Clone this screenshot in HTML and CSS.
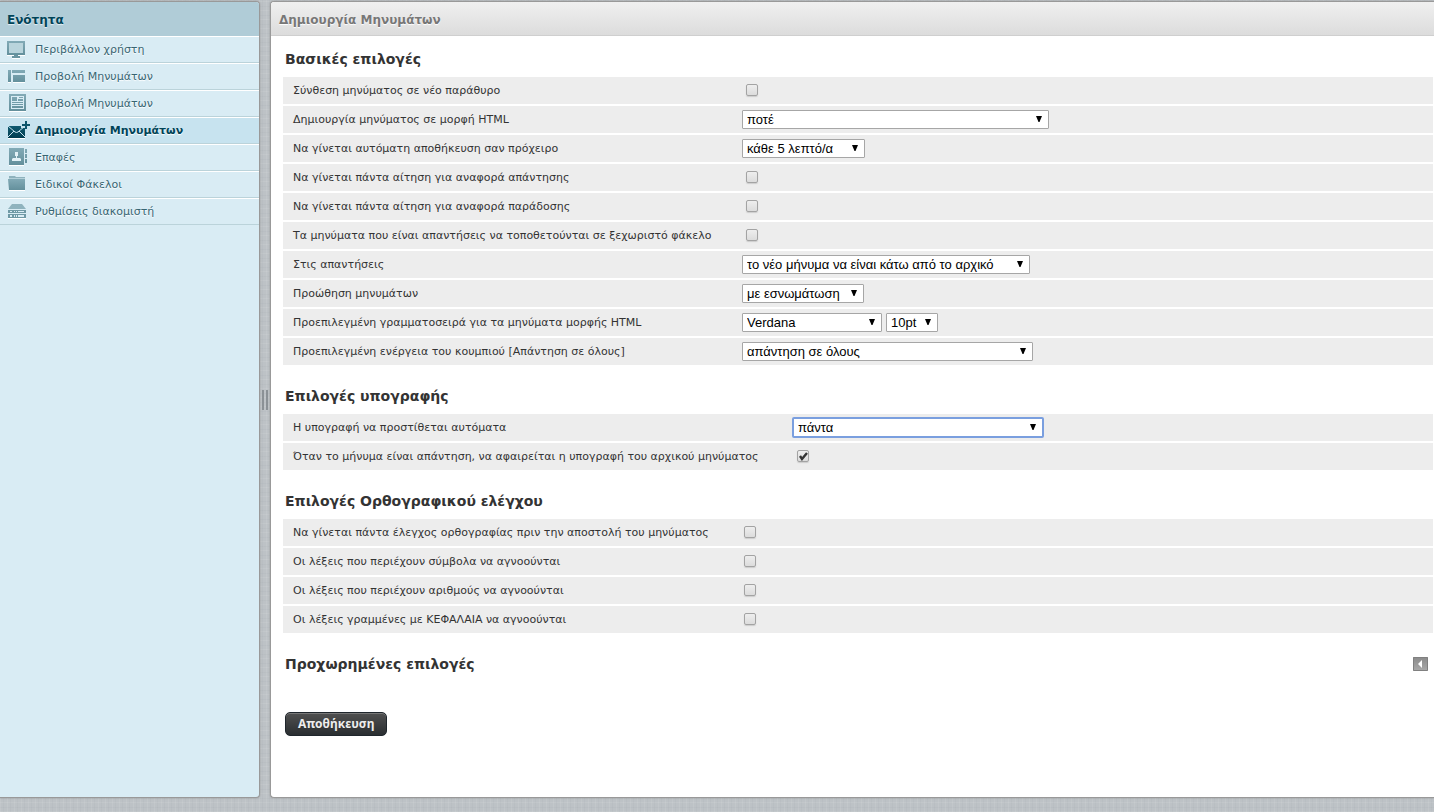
FILE: index.html
```html
<!DOCTYPE html>
<html lang="el">
<head>
<meta charset="utf-8">
<title>Δημιουργία Μηνυμάτων</title>
<link rel="stylesheet" href="styles.css">
</head>
<body>
<svg class="defs" aria-hidden="true">
  <defs>
    <linearGradient id="teal" x1="0" y1="0" x2="0" y2="1"><stop offset="0" stop-color="#82aab6"/><stop offset="1" stop-color="#64909c"/></linearGradient>
    <linearGradient id="dark" x1="0" y1="0" x2="0" y2="1"><stop offset="0" stop-color="#0f5a70"/><stop offset="1" stop-color="#013d50"/></linearGradient>
  </defs>
</svg>
<div class="layout">
  <nav class="sidebar" aria-label="Ενότητα">
    <h2 class="sidebar-title">Ενότητα</h2>
    <ul class="sections">
      <li><a class="section" href="#ui">
        <svg class="icon" viewBox="0 0 24 20"><path fill="#fff" d="M1 15h18v1H1zM6 18h8v1H6z"/><path fill="url(#teal)" fill-rule="evenodd" d="M1 1h18v14H1zM3 3v10h14V3z"/><path fill="#b9d4dc" d="M3 3h14v10H3z"/><path fill="#6a95a1" d="M8 15h4v2H8zM6 16h8v2H6z"/></svg>
        Περιβάλλον χρήστη</a></li>
      <li><a class="section" href="#list">
        <svg class="icon" viewBox="0 0 24 20"><path fill="#fff" d="M2 15h3v1H2zM7 15h12v1H7z"/><path fill="url(#teal)" d="M2 3h3v12H2zM6 3h13v3H6zM7 8h12v7H7z"/></svg>
        Προβολή Μηνυμάτων</a></li>
      <li><a class="section" href="#view">
        <svg class="icon" viewBox="0 0 24 20"><path fill="#fff" d="M3 17h17v1H3z"/><path fill="url(#teal)" d="M3 0h17v17H3z"/><path fill="#d9ecf4" fill-rule="evenodd" d="M5 2h13v13H5zM6 3v4h5V3zM13 3v1h4V3zM12 5v2h5V5zM6 8v1h11V8zM6 10v1h11v-1zM6 12v2h11v-2z"/></svg>
        Προβολή Μηνυμάτων</a></li>
      <li><a class="section active" href="#compose" aria-current="page">
        <svg class="icon" viewBox="0 0 24 20"><path fill="url(#dark)" d="M2 5h17v12H2z"/><path fill="#fff" d="M2 17h17v1H2z"/><path fill="none" stroke="#c7e3ef" d="M2 5l7 6q1.500 1 3 0l7-6M2 16l6-6M19 16l-6-6"/><path fill="#c7e3ef" d="M15 2h7v6h-3V7h-4z"/><path fill="#0c546a" d="M19 0h2v3h3v2h-3v3h-2V5h-3V3h3z"/></svg>
        Δημιουργία Μηνυμάτων</a></li>
      <li><a class="section" href="#contacts">
        <svg class="icon" viewBox="0 0 24 20"><path fill="#fff" d="M3 17h15v1H3z"/><path fill="url(#teal)" d="M3 0h15v17H3zM19 1h2v4h-2zM19 6h2v4h-2zM19 11h2v4h-2z"/><path fill="#e2f1f6" d="M9 4h3v4h-1v2h3l1 1v2H6v-2l1-1h3V8H9z"/></svg>
        Επαφές</a></li>
      <li><a class="section" href="#folders">
        <svg class="icon" viewBox="0 0 24 20"><path fill="#8eb2bd" d="M3 1h6l1 1h9v3H3z"/><path fill="#b4d0d9" d="M3 3h16v1H3z"/><path fill="url(#teal)" d="M2 4h17v11H3z"/><path fill="#fff" d="M3 15h16v1H3z"/></svg>
        Ειδικοί Φάκελοι</a></li>
      <li><a class="section" href="#server">
        <svg class="icon" viewBox="0 0 24 20"><path fill="#8fb3be" d="M6 2h10l4 5H2z"/><path fill="#6f99a5" d="M2 8h18v3H2zM2 12h18v4H2z"/><path fill="#d9ecf4" d="M4 9h2v1H4zM8 9h1v1H8zM10 9h1v1h-1zM12 9h6v1h-6zM4 13h2v2H4zM8 13h1v2H8zM10 13h1v2h-1zM12 13h6v2h-6z"/><path fill="#fff" d="M2 16h18v1H2z"/></svg>
        Ρυθμίσεις διακομιστή</a></li>
    </ul>
  </nav>
  <div class="splitter"><span class="grip"></span></div>
  <main class="panel">
    <h1 class="panel-title">Δημιουργία Μηνυμάτων</h1>
    <form class="prefs">
      <h2 class="group-title">Βασικές επιλογές</h2>
      <table class="options">
        <colgroup><col class="label-main"><col></colgroup>
        <tr><th><label for="o1">Σύνθεση μηνύματος σε νέο παράθυρο</label></th><td><input type="checkbox" class="check" id="o1"></td></tr>
        <tr><th><label for="o2">Δημιουργία μηνύματος σε μορφή HTML</label></th><td><select class="select w-html" id="o2"><option>ποτέ</option></select></td></tr>
        <tr><th><label for="o3">Να γίνεται αυτόματη αποθήκευση σαν πρόχειρο</label></th><td><select class="select w-draft" id="o3"><option>κάθε 5 λεπτό/α</option></select></td></tr>
        <tr><th><label for="o4">Να γίνεται πάντα αίτηση για αναφορά απάντησης</label></th><td><input type="checkbox" class="check" id="o4"></td></tr>
        <tr><th><label for="o5">Να γίνεται πάντα αίτηση για αναφορά παράδοσης</label></th><td><input type="checkbox" class="check" id="o5"></td></tr>
        <tr><th><label for="o6">Τα μηνύματα που είναι απαντήσεις να τοποθετούνται σε ξεχωριστό φάκελο</label></th><td><input type="checkbox" class="check" id="o6"></td></tr>
        <tr><th><label for="o7">Στις απαντήσεις</label></th><td><select class="select w-reply" id="o7"><option>το νέο μήνυμα να είναι κάτω από το αρχικό</option></select></td></tr>
        <tr><th><label for="o8">Προώθηση μηνυμάτων</label></th><td><select class="select w-forward" id="o8"><option>με εσνωμάτωση</option></select></td></tr>
        <tr><th><label for="o9">Προεπιλεγμένη γραμματοσειρά για τα μηνύματα μορφής HTML</label></th><td><div class="pair"><select class="select w-font" id="o9"><option>Verdana</option></select><select class="select w-size" aria-label="Μέγεθος"><option>10pt</option></select></div></td></tr>
        <tr><th><label for="o10">Προεπιλεγμένη ενέργεια του κουμπιού [Απάντηση σε όλους]</label></th><td><select class="select w-all" id="o10"><option>απάντηση σε όλους</option></select></td></tr>
      </table>

      <h2 class="group-title">Επιλογές υπογραφής</h2>
      <table class="options">
        <colgroup><col class="label-signature"><col></colgroup>
        <tr><th><label for="s1">Η υπογραφή να προστίθεται αυτόματα</label></th><td><select class="select w-sign focused" id="s1"><option>πάντα</option></select></td></tr>
        <tr><th><label for="s2">Όταν το μήνυμα είναι απάντηση, να αφαιρείται η υπογραφή του αρχικού μηνύματος</label></th><td><input type="checkbox" class="check" id="s2" checked></td></tr>
      </table>

      <h2 class="group-title">Επιλογές Ορθογραφικού ελέγχου</h2>
      <table class="options">
        <colgroup><col class="label-spell"><col></colgroup>
        <tr><th><label for="p1">Να γίνεται πάντα έλεγχος ορθογραφίας πριν την αποστολή του μηνύματος</label></th><td><input type="checkbox" class="check" id="p1"></td></tr>
        <tr><th><label for="p2">Οι λέξεις που περιέχουν σύμβολα να αγνοούνται</label></th><td><input type="checkbox" class="check" id="p2"></td></tr>
        <tr><th><label for="p3">Οι λέξεις που περιέχουν αριθμούς να αγνοούνται</label></th><td><input type="checkbox" class="check" id="p3"></td></tr>
        <tr><th><label for="p4">Οι λέξεις γραμμένες με ΚΕΦΑΛΑΙΑ να αγνοούνται</label></th><td><input type="checkbox" class="check" id="p4"></td></tr>
      </table>

      <div class="advanced">
        <h2 class="group-title">Προχωρημένες επιλογές</h2>
        <button type="button" class="toggle" aria-label="Προχωρημένες επιλογές"><svg class="toggle-icon" viewBox="0 0 15 14"><path fill="#fff" d="M9 3v8L5 7z"/></svg></button>
      </div>
      <button type="submit" class="save">Αποθήκευση</button>
    </form>
  </main>
</div>
</body>
</html>
```
FILE: styles.css
```css
* { box-sizing: border-box; }

body {
  margin: 0;
  font: 11px/16px Verdana, "DejaVu Sans", sans-serif;
  color: #333;
  background-color: #bdc2c6;
  background-image:
    repeating-linear-gradient(90deg, rgba(255,255,255,.08) 0 1px, transparent 1px 3px, rgba(90,100,110,.04) 3px 4px, transparent 4px 7px),
    repeating-linear-gradient(0deg, rgba(255,255,255,.08) 0 1px, transparent 1px 4px, rgba(90,100,110,.04) 4px 5px, transparent 5px 9px);
}

.defs { position: absolute; width: 0; height: 0; }

.layout {
  display: flex;
  min-height: 100vh;
  padding: 1px 0 14px;
}

/* Sidebar */
.sidebar {
  flex: 0 0 260px;
  background: #d9ecf4;
  border: 1px solid #999;
  border-left: 0;
  border-radius: 0 4px 4px 0;
  box-shadow: 0 0 2px #999;
  overflow: hidden;
}

.sidebar-title {
  margin: 0;
  padding: 1px 7px 0;
  height: 34px;
  font-size: 12px;
  line-height: 34px;
  color: #004458;
  background: #b0ccd7;
  text-shadow: 0 1px 1px #e8f2f6;
}

.sections { margin: 0; padding: 0; list-style: none; }

.section {
  display: flex;
  align-items: center;
  gap: 5px;
  height: 27px;
  padding: 1px 0 0 6px;
  border-top: 1px solid #fff;
  border-bottom: 1px solid #bbd3da;
  color: #376572;
  text-decoration: none;
  text-shadow: 0 1px 1px #fff;
  white-space: nowrap;
}

.section.active {
  background: #c7e3ef;
  color: #004458;
  font-weight: bold;
}

.icon { width: 24px; height: 20px; overflow: visible; }

/* Splitter */
.splitter {
  flex: 0 0 10px;
  display: flex;
  align-items: center;
  justify-content: center;
}

.grip {
  width: 6px;
  height: 20px;
  border: solid #8b9196;
  border-width: 0 2px;
}

/* Main panel */
.panel {
  flex: 1;
  min-width: 0;
  background: #fff;
  border: 1px solid #999;
  border-right: 0;
  border-radius: 4px 0 0 4px;
  box-shadow: 0 0 2px #999;
  overflow: hidden;
}

.panel-title {
  margin: 0;
  padding: 1px 8px 0;
  font-size: 12px;
  line-height: 34px;
  height: 34px;
  color: #777;
  background: linear-gradient(#f0f0f0, #dcdcdc);
  border-bottom: 1px solid #cfcfcf;
  text-shadow: 0 1px 1px #fff;
}

.prefs { padding: 14px 1px 14px 12px; }

.group-title {
  margin: 20px 0 9px;
  padding-left: 2px;
  font-size: 14px;
  line-height: 18px;
}

.group-title:first-child { margin-top: 0; }

.options {
  width: 100%;
  table-layout: fixed;
  border-collapse: separate;
  border-spacing: 0;
}

.label-main { width: 459px; }
.label-signature { width: 510px; }
.label-spell { width: 457px; }

.options th,
.options td {
  height: 29px;
  padding: 0;
  background: #ededed;
  border-bottom: 2px solid #fff;
  vertical-align: middle;
  white-space: nowrap;
}

.options th {
  padding: 1px 0 0 10px;
  font-weight: normal;
  text-align: left;
}

.select {
  display: block;
  appearance: none;
  height: 19px;
  margin: 0;
  padding: 0 18px 0 4px;
  font: 13px/17px Arial, "Liberation Sans", sans-serif;
  color: #000;
  border: 1px solid #a6a6a6;
  border-radius: 1px;
  background: #fff url("data:image/svg+xml,%3Csvg xmlns='http://www.w3.org/2000/svg' width='6' height='6'%3E%3Cpath d='M0 0h6L3.500 6h-1z'/%3E%3C/svg%3E") no-repeat right 6px top 5px;
}

.focused { outline: 2px solid #7a9fdf; outline-offset: -1px; }

.pair { display: flex; gap: 4px; }

.w-html { width: 307px; }
.w-draft { width: 123px; }
.w-forward { width: 122px; }
.w-reply { width: 288px; }
.w-font { width: 140px; }
.w-size { width: 52px; }
.w-all { width: 291px; }
.w-sign { width: 250px; }

.check {
  display: block;
  appearance: none;
  width: 12px;
  height: 12px;
  margin: 0 4px 2px;
  border: 1px solid #a3a3a3;
  border-radius: 2px;
  background: linear-gradient(#eee, #dcdcdc);
  box-shadow: 0 1px 1px #ccc;
}

.check:checked {
  background: url("data:image/svg+xml,%3Csvg xmlns='http://www.w3.org/2000/svg' width='10' height='10'%3E%3Cpath d='M2 5l2 3 5-6' fill='none' stroke='%23333' stroke-width='2.4'/%3E%3C/svg%3E") no-repeat center, linear-gradient(#eee, #dcdcdc);
}

.advanced {
  display: flex;
  align-items: center;
  justify-content: space-between;
  margin: 20px 5px 39px 0;
}

.advanced .group-title { margin: 0; }

.toggle {
  width: 15px;
  height: 14px;
  padding: 0;
  border: 0;
  border-radius: 1px;
  background: linear-gradient(#8a8a8a, #aaa);
  box-shadow: inset 0 0 0 1px #808080;
}

.toggle-icon { display: block; width: 15px; height: 14px; }

.save {
  display: block;
  height: 24px;
  margin-left: 2px;
  padding: 0 12px;
  font: bold 12px/20px "Noto Sans", sans-serif;
  color: #ededed;
  text-shadow: 0 1px 1px #333;
  border: 1px solid #1f262c;
  border-radius: 5px;
  background: linear-gradient(#505050, #2a2e31);
  box-shadow: inset 0 1px 0 #777;
}
```
